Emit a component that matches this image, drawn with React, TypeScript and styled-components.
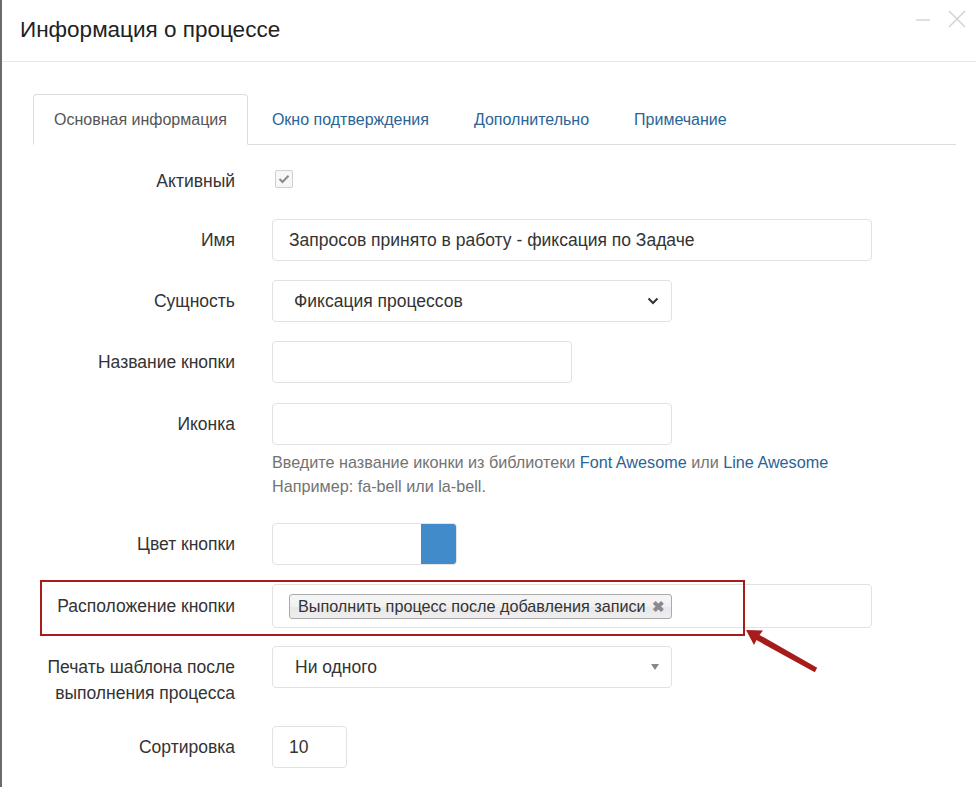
import styled, { createGlobalStyle } from "styled-components";

const GlobalStyle = createGlobalStyle`
  html, body {
    margin: 0;
    padding: 0;
    background: #fff;
  }
  body {
    font-family: "Liberation Sans", Arial, sans-serif;
    color: #333;
  }
`;

const Modal = styled.div`
  position: relative;
  width: 976px;
  height: 787px;
  box-sizing: border-box;
  border-left: 2px solid #6b6b6b;
  background: #fff;
  overflow: hidden;
`;

const Header = styled.div`
  height: 62px;
  box-sizing: border-box;
  border-bottom: 1px solid #e8e8e8;
  display: flex;
  align-items: center;
  justify-content: space-between;
  padding: 0 9px 0 18px;
`;

const Title = styled.h4`
  margin: 0 0 2px;
  font-size: 22.5px;
  font-weight: normal;
  color: #222;
`;

const HeaderTools = styled.div`
  display: flex;
  align-items: center;
  gap: 16px;
  margin-top: -24px;
`;

const Body = styled.div`
  padding: 32px 20px 0 31px;
`;

const Tabs = styled.ul`
  list-style: none;
  margin: 0;
  padding: 0;
  display: flex;
  border-bottom: 1px solid #ddd;
  height: 50px;
`;

const Tab = styled.li<{ $active?: boolean }>`
  padding: 1px 20px 0;
  margin-right: 3px;
  height: ${(p) => (p.$active ? "51px" : "50px")};
  box-sizing: border-box;
  display: flex;
  align-items: center;
  font-size: 16px;
  color: ${(p) => (p.$active ? "#555" : "#2a6496")};
  background: #fff;
  border: 1px solid ${(p) => (p.$active ? "#ddd" : "transparent")};
  border-bottom-color: ${(p) => (p.$active ? "#fff" : "transparent")};
  border-radius: 4px 4px 0 0;
`;

const Form = styled.div`
  display: flex;
  flex-direction: column;
  padding-top: 23px;
`;

const Row = styled.div<{ $mb?: number }>`
  position: relative;
  display: flex;
  align-items: flex-start;
  margin-bottom: ${(p) => (p.$mb ?? 19)}px;
`;

const Label = styled.label<{ $pt?: number }>`
  width: 202px;
  flex: none;
  text-align: right;
  font-size: 17.5px;
  line-height: 26px;
  color: #333;
  padding-top: ${(p) => (p.$pt ?? 8)}px;
  margin-right: 37px;
`;

const Field = styled.div`
  display: flex;
  flex-direction: column;
`;

const Input = styled.div<{ $w: number; $h?: number; $pl?: number }>`
  width: ${(p) => p.$w}px;
  height: ${(p) => p.$h ?? 42}px;
  box-sizing: border-box;
  border: 1px solid #e2e2e2;
  border-radius: 4px;
  background: #fff;
  display: flex;
  align-items: center;
  padding-left: ${(p) => p.$pl ?? 16}px;
  padding-right: 12px;
  font-size: 17.5px;
  color: #333;
  justify-content: space-between;
`;

const CheckWrap = styled.div`
  height: 26px;
  display: flex;
  align-items: center;
  padding-left: 3px;
`;

const CheckBox = styled.span`
  width: 16px;
  height: 16px;
  border: 1px solid #d0d0d0;
  border-radius: 2px;
  background: #f7f7f7;
  display: flex;
  align-items: center;
  justify-content: center;
  margin-top: -4px;
`;

const Help = styled.div`
  margin-top: 5px;
  font-size: 16.2px;
  line-height: 24px;
  color: #737373;
`;

const Link = styled.a`
  color: #2a6496;
  text-decoration: none;
`;

const ColorInput = styled.div`
  width: 185px;
  height: 42px;
  box-sizing: border-box;
  border: 1px solid #e2e2e2;
  border-radius: 4px;
  display: flex;
  justify-content: flex-end;
  overflow: hidden;
`;

const Swatch = styled.span`
  width: 35px;
  height: 100%;
  background: #428bca;
`;

const Tag = styled.span`
  display: inline-flex;
  align-items: center;
  height: 25px;
  box-sizing: border-box;
  padding: 0 6px 0 8px;
  gap: 6px;
  border: 1px solid #aaa;
  border-radius: 3px;
  background-image: linear-gradient(#f4f4f4 20%, #f0f0f0 50%, #e8e8e8 52%, #eee 100%);
  font-size: 16.2px;
  color: #333;
`;

const TagX = styled.span`
  font-size: 15px;
  font-weight: bold;
  color: #8a8a8a;
  line-height: 1;
`;

const Highlight = styled.div`
  position: absolute;
  left: 7px;
  top: -4px;
  width: 705px;
  height: 56px;
  box-sizing: border-box;
  border: 2px solid #a51c1c;
  pointer-events: none;
`;

const Arrow = styled.svg`
  position: absolute;
  left: 712px;
  top: 40px;
`;

const Caret = styled.span`
  width: 0;
  height: 0;
  border-left: 4px solid transparent;
  border-right: 4px solid transparent;
  border-top: 6px solid #888;
`;

export default function App() {
  return (
    <>
      <GlobalStyle />
      <Modal>
        <Header>
          <Title>Информация о процессе</Title>
          <HeaderTools>
            <svg width="16" height="18" viewBox="0 0 16 18">
              <line x1="1" y1="10" x2="15" y2="10" stroke="#d6d6d6" strokeWidth="1.5" />
            </svg>
            <svg width="20" height="20" viewBox="0 0 20 20">
              <path d="M2 2 L18 18 M18 2 L2 18" stroke="#d2d2d2" strokeWidth="1.5" fill="none" />
            </svg>
          </HeaderTools>
        </Header>
        <Body>
          <Tabs>
            <Tab $active>Основная информация</Tab>
            <Tab>Окно подтверждения</Tab>
            <Tab>Дополнительно</Tab>
            <Tab>Примечание</Tab>
          </Tabs>
          <Form>
            <Row $mb={25}>
              <Label $pt={0}>Активный</Label>
              <CheckWrap>
                <CheckBox>
                  <svg width="12" height="10" viewBox="0 0 12 10">
                    <path d="M1.5 5 L4.5 8 L10.5 1.8" stroke="#8a8a8a" strokeWidth="2" fill="none" />
                  </svg>
                </CheckBox>
              </CheckWrap>
            </Row>
            <Row>
              <Label>Имя</Label>
              <Input $w={600}>Запросов принято в работу - фиксация по Задаче</Input>
            </Row>
            <Row>
              <Label>Сущность</Label>
              <Input $w={400} $pl={21}>
                Фиксация процессов
                <svg width="12" height="8" viewBox="0 0 12 8">
                  <path d="M1.5 1.5 L6 6 L10.5 1.5" stroke="#333" strokeWidth="2" fill="none" />
                </svg>
              </Input>
            </Row>
            <Row $mb={20}>
              <Label>Название кнопки</Label>
              <Input $w={300} />
            </Row>
            <Row $mb={25}>
              <Label>Иконка</Label>
              <Field>
                <Input $w={400} />
                <Help>
                  Введите название иконки из библиотеки <Link>Font Awesome</Link> или{" "}
                  <Link>Line Awesome</Link>
                  <br />
                  Например: fa-bell или la-bell.
                </Help>
              </Field>
            </Row>
            <Row>
              <Label>Цвет кнопки</Label>
              <ColorInput>
                <Swatch />
              </ColorInput>
            </Row>
            <Row $mb={18}>
              <Highlight />
              <Label $pt={9}>Расположение кнопки</Label>
              <Input $w={600} $h={44}>
                <Tag>
                  Выполнить процесс после добавления записи
                  <TagX>✖</TagX>
                </Tag>
              </Input>
              <Arrow width="80" height="55" viewBox="0 0 80 55">
                <path d="M1 6 L18 6.5 L14.5 10.9 L72.2 43.8 L69.8 48.2 L11.5 16.1 L9 21 Z" fill="#a81b1b" />
              </Arrow>
            </Row>
            <Row $mb={20}>
              <Label>
                Печать шаблона после
                <br />
                выполнения процесса
              </Label>
              <Input $w={400} $pl={22}>
                Ни одного
                <Caret />
              </Input>
            </Row>
            <Row>
              <Label>Сортировка</Label>
              <Input $w={75}>10</Input>
            </Row>
          </Form>
        </Body>
      </Modal>
    </>
  );
}
